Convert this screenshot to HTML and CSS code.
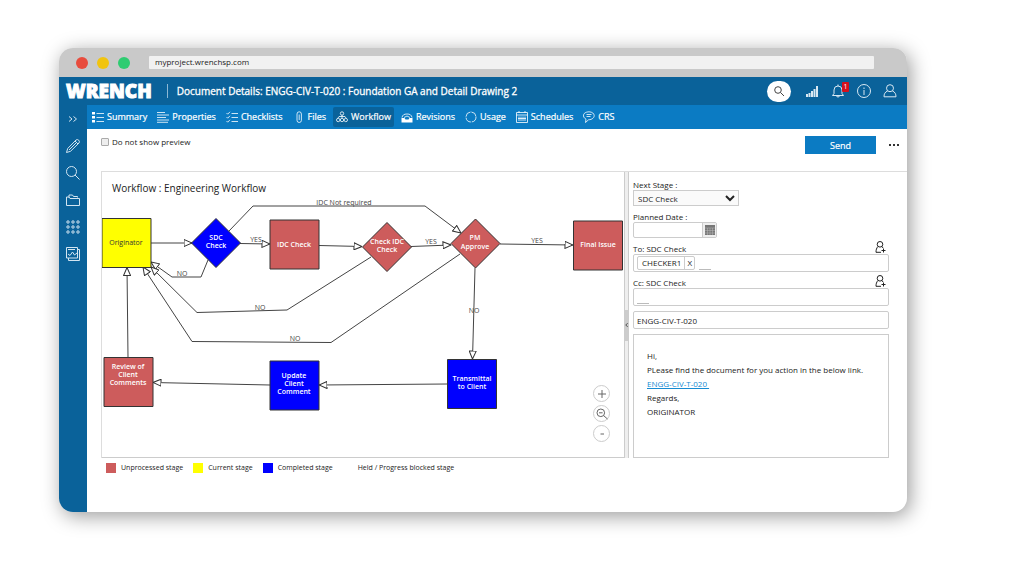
FILE: index.html
```html
<!DOCTYPE html>
<html lang="en">
<head>
<meta charset="utf-8">
<title>Document Details</title>
<link rel="stylesheet" href="styles.css">
</head>
<body>
<div class="window">
  <div class="chrome">
    <span class="dot dot-red"></span><span class="dot dot-yellow"></span><span class="dot dot-green"></span>
    <input class="address" type="text" aria-label="Address" value="myproject.wrenchsp.com">
  </div>

  <header class="topbar">
    <span class="logo">WRENCH</span>
    <span class="divider"></span>
    <h1 class="doc-title">Document Details: ENGG-CIV-T-020 : Foundation GA and Detail Drawing 2</h1>
    <button class="search-btn" aria-label="Search"><svg class="icon" viewBox="0 0 12 12"><circle cx="5" cy="5" r="3.3"/><path d="M7.500 7.500 11 11"/></svg></button>
    <div class="top-icons">
      <button class="icon-btn" aria-label="Signal"><svg class="icon-l bars" viewBox="0 0 14 14"><path d="M1 13v-3h2v3zM3.500 13V9h2v4zM6 13V7h2v6zM8.500 13V5h2v8zM11 13V2h2v11z"/></svg></button>
      <button class="icon-btn" aria-label="Notifications"><svg class="icon-l" viewBox="0 0 14 14"><path d="M1.500 11.500h11L11 9.500V6a4 4 0 0 0-8 0v3.500zM5.500 11.500a1.500 1.500 0 0 0 3 0M7 2V.5"/></svg><span class="badge">1</span></button>
      <button class="icon-btn" aria-label="Information"><svg class="icon-l" viewBox="0 0 14 14"><circle cx="7" cy="7" r="6.500"/><path d="M7 6v5M7 3.500V5"/></svg></button>
      <button class="icon-btn" aria-label="Account"><svg class="icon-l" viewBox="0 0 14 14"><circle cx="7" cy="4.200" r="3.500"/><path d="M4.500 7C2 8 1 10 1 12.800h12C13 10 12 8 9.500 7"/></svg></button>
    </div>
  </header>

  <div class="body">
    <aside class="sidebar">
      <button class="side-btn" aria-label="Expand"><svg class="icon-l" viewBox="0 0 14 14"><path d="m3 4.500 3 2.500-3 2.500M7.500 4.500l3 2.500-3 2.500"/></svg></button>
      <button class="side-btn" aria-label="Edit"><svg class="icon-l" viewBox="0 0 14 14"><path d="m.5 13.500 1.200-4L10 1q1.500-1 2.700.2T13 4L4.500 12.300zM9 2l3 3M3 11l7-7"/></svg></button>
      <button class="side-btn" aria-label="Search"><svg class="icon-l" viewBox="0 0 14 14"><circle cx="5.500" cy="5.500" r="5"/><path d="m9 9 4.500 4.500"/></svg></button>
      <button class="side-btn" aria-label="Folders"><svg class="icon-l" viewBox="0 0 14 14"><path d="M3 4.500V2h3.500l1 1.500h4v1M.5 12.500V4h2.500l1 1.500h9.500v7z"/></svg></button>
      <button class="side-btn" aria-label="Apps"><svg class="icon-l" viewBox="0 0 14 14"><circle cx="2" cy="2" r="1.200"/><circle cx="7" cy="2" r="1.200"/><circle cx="12" cy="2" r="1.200"/><circle cx="2" cy="7" r="1.200"/><circle cx="7" cy="7" r="1.200"/><circle cx="12" cy="7" r="1.200"/><circle cx="2" cy="12" r="1.200"/><circle cx="7" cy="12" r="1.200"/><circle cx="12" cy="12" r="1.200"/></svg></button>
      <button class="side-btn" aria-label="Reports"><svg class="icon-l" viewBox="0 0 14 14"><path d="M.5.5h11v10.500H.5zM11.500 2.500h2v11H2.500V11M2 7l2 1.500L6.500 5l2 3L11 6M2 2.500h7"/></svg></button>
    </aside>

    <div class="main">
      <nav class="tabs">
        <a class="tab" href="#"><svg class="icon" viewBox="0 0 12 12"><path class="solid" d="M0 1h3v2.500H0zM0 5h3v2.500H0zM0 9h3v2.500H0z"/><path d="M4.500 2.500H12M4.500 6.500H12M4.500 10.500H12"/></svg>Summary</a>
        <a class="tab" href="#"><svg class="icon" viewBox="0 0 12 12"><path d="M0 1.500h8M0 4h12M0 6.500h9M0 9h12M0 11.300h11"/></svg>Properties</a>
        <a class="tab" href="#"><svg class="icon" viewBox="0 0 12 12"><path d="m.5 2 1.200 1.200L4 .8M.5 6l1.200 1.200L4 4.800M.5 10l1.200 1.200L4 8.800M5.500 2.500H12M5.500 6.500H12M5.500 10.500H12"/></svg>Checklists</a>
        <a class="tab" href="#"><svg class="icon" viewBox="0 0 12 12"><path d="M4 8V3a2.200 2.200 0 0 1 4.400 0v6.300a2.200 2.200 0 0 1-4.400 0V8M6.200 3.500V9"/></svg>Files</a>
        <a class="tab tab-active" href="#" aria-current="page"><svg class="icon" viewBox="0 0 12 12"><circle cx="6" cy="2.500" r="1.700"/><circle cx="2.200" cy="9" r="1.700"/><circle cx="6" cy="9" r="1.700"/><circle cx="9.800" cy="9" r="1.700"/><path d="M6 4v3M2 7l1-1.500h6L10 7"/></svg>Workflow</a>
        <a class="tab" href="#"><svg class="icon" viewBox="0 0 12 12"><path class="solid" d="M.5 7h3l1 1.500h3l1-1.500h3v4.500H.5z"/><path d="M1 6.500C1.500 4 3 3 6 3s4.500 1 5 3.500M3 6.500q3-3 6 0"/></svg>Revisions</a>
        <a class="tab" href="#"><svg class="icon" viewBox="0 0 12 12"><circle cx="6" cy="6" r="5" stroke-dasharray="6.800 1"/></svg>Usage</a>
        <a class="tab" href="#"><svg class="icon" viewBox="0 0 12 12"><path d="M.5 1.500h11v10H.5zM.5 4h11M3 0v2M9 0v2M3 5.500V10M5 5.500V10M7 5.500V10M9 5.500V10M2 7.500h8"/></svg>Schedules</a>
        <a class="tab" href="#"><svg class="icon" viewBox="0 0 12 12"><path d="M3 8.200C-1 6-.5 1 6 .8 13 1 13 8.500 5.500 8.800L2.500 11.500zM3.500 3.500h5M3.500 5.500h4"/></svg>CRS</a>
      </nav>

      <div class="actions">
        <label class="preview"><input class="check" type="checkbox">Do not show preview</label>
        <button class="send">Send</button>
        <button class="more" aria-label="More"><span class="pt"></span><span class="pt"></span><span class="pt"></span></button>
      </div>

      <div class="panels">
        <section class="flow">
          <h2 class="flow-title">Workflow : Engineering Workflow</h2>
          <svg class="diagram" viewBox="102 195 522 262" role="img" aria-label="Engineering Workflow">
            <defs><marker id="arrow" viewBox="0 0 9 8" refX="8.500" refY="4" markerWidth="9" markerHeight="8" markerUnits="userSpaceOnUse" orient="auto"><path class="head" d="M.5.5 8.500 4 .5 7.500z"/></marker></defs>
            <g class="edge">
              <path d="M151 243h41"/>
              <path d="M229 231 253 206H425L461 233"/>
              <path d="M240 243.500 270 244"/>
              <path d="M319 245.500 362 246.500"/>
              <path d="M411 246.500 451 245"/>
              <path d="M500 244 573 245"/>
              <path d="M208 260 201 277H172L151 262"/>
              <path d="M371 257 287 310 197 312.500 151 267"/>
              <path d="M460 254 331 342.500 192 341.500 143 267"/>
              <path d="M475 268 472.500 359"/>
              <path d="M447 384 319 385"/>
              <path d="M270 385 153 382.500"/>
              <path d="M128 357.500 127 267.500"/>
            </g>
            <g class="node">
              <path class="current" d="M102 218.500h49v49h-49z"/>
              <path class="done" d="M216 218.500 240.500 243 216 267.500 191.500 243z"/>
              <path class="todo" d="M270 220h49v49h-49z"/>
              <path class="todo" d="M387 222.500 411.500 247 387 271.500 362.500 247z"/>
              <path class="todo" d="M475.500 219 500 243.500 475.500 268 451 243.500z"/>
              <path class="todo" d="M573.500 221h49v49h-49z"/>
              <path class="todo" d="M104 357.500h49v49h-49z"/>
              <path class="done" d="M270 361h49v49h-49z"/>
              <path class="done" d="M447.500 359.500h49v49h-49z"/>
            </g>
            <g class="name">
              <text class="dark" x="126" y="245">Originator</text>
              <text x="216" y="240">SDC</text><text x="216" y="248">Check</text>
              <text x="294" y="247">IDC Check</text>
              <text x="387" y="244">Check IDC</text><text x="387" y="252">Check</text>
              <text x="475" y="240">PM</text><text x="475" y="249">Approve</text>
              <text x="598" y="247">Final Issue</text>
              <text x="128" y="369">Review of</text><text x="128" y="377">Client</text><text x="128" y="385">Comments</text>
              <text x="294" y="378">Update</text><text x="294" y="386">Client</text><text x="294" y="394">Comment</text>
              <text x="472" y="381">Transmittal</text><text x="472" y="389">to Client</text>
            </g>
            <g class="edge-name">
              <text x="344" y="205">IDC Not required</text>
              <text x="256" y="242">YES</text><text x="431" y="244">YES</text><text x="537" y="243">YES</text>
              <text x="182" y="276">NO</text><text x="260" y="310">NO</text><text x="295" y="341">NO</text><text x="474" y="313">NO</text>
            </g>
          </svg>
          <div class="zoom">
            <button class="zoom-btn" aria-label="Zoom in"><svg class="icon" viewBox="0 0 12 12"><path d="M2 6h8M6 2v8"/></svg></button>
            <button class="zoom-btn" aria-label="Reset zoom"><svg class="icon" viewBox="0 0 12 12"><circle cx="4.800" cy="4.800" r="3.800"/><path d="M3 4.800h3.600M7.500 7.500l4 3.500"/></svg></button>
            <button class="zoom-btn" aria-label="Zoom out"><svg class="icon" viewBox="0 0 12 12"><path d="M4.500 6h3.500"/></svg></button>
          </div>
        </section>

        <div class="splitter"><button class="grip" aria-label="Collapse"><svg class="grip-icon" viewBox="0 0 4 6"><path d="M3.500.5 1 3l2.500 2.500"/></svg></button></div>

        <form class="form">
          <div class="field">
            <label class="label" for="stage">Next Stage :</label>
            <select class="control select" id="stage"><option>SDC Check</option></select>
          </div>
          <div class="field">
            <label class="label" for="date">Planned Date :</label>
            <div class="control date"><input class="bare" id="date" type="text"><button class="cal" type="button" aria-label="Pick a date"><svg class="cal-icon" viewBox="0 0 10 10"><path class="cal-body" d="M0 0h10v10H0z"/><path class="cal-grid" d="M0 3h10M2.500 3v7M5 3v7M7.500 3v7M0 5.500h10M0 8h10"/></svg></button></div>
          </div>
          <div class="field">
            <div class="label-row"><label class="label" for="to">To: SDC Check</label><button class="add" type="button" aria-label="Add recipient"><svg class="icon" viewBox="0 0 12 12"><circle cx="6" cy="3.300" r="2.800"/><path d="M4 5.500C2.500 7 2 9 2 11.300h5M8 5.500l1 1.500M9.500 7.500v4M7.500 9.500h4"/></svg></button></div>
            <div class="control box"><span class="chip">CHECKER1<button class="chip-x" type="button" aria-label="Remove CHECKER1">X</button></span><input class="blank" id="to" type="text"></div>
          </div>
          <div class="field">
            <div class="label-row"><label class="label" for="cc">Cc: SDC Check</label><button class="add" type="button" aria-label="Add copy recipient"><svg class="icon" viewBox="0 0 12 12"><circle cx="6" cy="3.300" r="2.800"/><path d="M4 5.500C2.500 7 2 9 2 11.300h5M8 5.500l1 1.500M9.500 7.500v4M7.500 9.500h4"/></svg></button></div>
            <div class="control box"><input class="blank" id="cc" type="text"></div>
          </div>
          <input class="control subject" type="text" aria-label="Subject" value="ENGG-CIV-T-020">
          <div class="message">
            <p class="line">Hi,</p>
            <p class="line">PLease find the document for you action in the below link.</p>
            <p class="line"><a class="link" href="#">ENGG-CIV-T-020&nbsp;</a></p>
            <p class="line">Regards,</p>
            <p class="line">ORIGINATOR</p>
          </div>
        </form>
      </div>

      <ul class="legend">
        <li class="key"><span class="swatch swatch-todo"></span>Unprocessed stage</li>
        <li class="key"><span class="swatch swatch-current"></span>Current stage</li>
        <li class="key"><span class="swatch swatch-done"></span>Completed stage</li>
        <li class="key"><span class="swatch"></span>Held / Progress blocked stage</li>
      </ul>
    </div>
  </div>
</div>
</body>
</html>
```
FILE: styles.css
```css
* { box-sizing: border-box; }
body {
  margin: 0;
  padding: 48px 117px 40px 59px;
  background: #fff;
  color: #222;
  font: 8px/11px "Open Sans", "Noto Sans", sans-serif;
}
button, input, select { font: inherit; color: inherit; margin: 0; padding: 0; }
button { border: 0; background: none; display: flex; align-items: center; justify-content: center; }
svg { display: block; fill: none; stroke: currentColor; }
.icon { width: 12px; height: 12px; }
.icon-l { width: 14px; height: 14px; }
.solid { fill: currentColor; stroke: none; }

.window {
  border-radius: 14px;
  overflow: hidden;
  background: #fff;
  box-shadow: 3px 4px 20px rgba(0, 0, 0, .4);
}
.chrome {
  display: flex;
  align-items: center;
  gap: 9px;
  height: 29px;
  padding: 0 33px 0 17px;
  background: #c9c9c9;
}
.dot { width: 12px; height: 12px; border-radius: 50%; }
.dot-red { background: #e84c3d; }
.dot-yellow { background: #f1c40f; }
.dot-green { background: #2ecc71; }
.address {
  flex: 1;
  min-width: 0;
  height: 13px;
  margin-left: 10px;
  padding: 0 6px 2px;
  border: 0;
  border-radius: 1px;
  background: #f1f1f1;
}

.topbar {
  display: flex;
  align-items: center;
  height: 28px;
  padding: 0 10px 0 7px;
  background: #0a629a;
  color: #fff;
}
.logo { font-size: 19px; line-height: 26px; font-weight: 800; -webkit-text-stroke: 1px #fff; }
.divider { width: 1px; height: 14px; margin: 0 9px 0 15px; background: #8db8d4; }
.doc-title { flex: 1; margin: 0; font-size: 10px; line-height: 14px; font-weight: 400; -webkit-text-stroke: .3px #fff; }
.search-btn { width: 24px; height: 21px; margin-right: 14px; border-radius: 11px; background: #fff; color: #444; }
.top-icons { display: flex; gap: 12px; color: #d9e8f2; }
.icon-btn { position: relative; }
.bars { fill: currentColor; stroke: none; }
.badge {
  position: absolute;
  top: -2px;
  right: -4px;
  width: 7px;
  border-radius: 1px;
  background: #d5101c;
  color: #fff;
  font-size: 7px;
  line-height: 10px;
}

.body { display: flex; }
.sidebar {
  width: 28px;
  display: flex;
  flex-direction: column;
  background: #0a629a;
  color: #d3e5f1;
}
.side-btn { height: 27px; }
.main { flex: 1; min-width: 0; }
.tabs {
  display: flex;
  align-items: center;
  gap: 4px;
  height: 24px;
  padding: 0 2px 1px;
  background: #0b7bc3;
}
.tab {
  display: flex;
  align-items: center;
  gap: 3px;
  height: 20px;
  padding: 0 3px;
  border-radius: 2px;
  color: #fff;
  font-size: 9px;
  -webkit-text-stroke: .2px #fff;
  text-decoration: none;
}
.tab .icon { stroke-width: .8; }
.tab-active { background: #0a629a; }

.actions { display: flex; align-items: center; height: 42px; padding: 0 8px 10px 14px; }
.preview { display: flex; align-items: center; gap: 3px; margin-right: auto; padding-bottom: 7px; }
.check { appearance: none; width: 8px; height: 8px; border: 1px solid #aaa; border-radius: 1px; background: #eee; }
.send { width: 71px; height: 18px; background: #0b7bc3; color: #fff; font-size: 9px; -webkit-text-stroke: .2px #fff; }
.more { gap: 2px; margin-left: 13px; }
.pt { width: 2px; height: 2px; background: #333; }

.panels { display: flex; margin-left: 14px; border: solid #ddd; border-width: 1px 0 0 1px; }
.flow { position: relative; flex: 1; min-width: 0; border-bottom: 1px solid #ccc; }
.flow-title { margin: 0; padding: 9px 10px 0; font-size: 10px; line-height: 14px; font-weight: 400; }
.diagram { width: 100%; }
.edge { stroke: #444; }
.edge path { marker-end: url(#arrow); }
.head { fill: #fff; stroke: #333; }
.node { stroke: #333; }
.todo { fill: #cd5c5c; }
.current { fill: #ff0; }
.done { fill: #00f; }
.name, .edge-name { stroke: none; text-anchor: middle; font-size: 7px; }
.name { fill: #fff; font-weight: 600; }
.dark { fill: #333; font-weight: 400; }
.edge-name { fill: #444; }
.zoom { position: absolute; right: 14px; bottom: 15px; display: grid; gap: 3px; }
.zoom-btn { width: 17px; height: 17px; border: 1px solid #ccc; border-radius: 50%; background: #fff; color: #666; }

.splitter { display: flex; align-items: center; width: 5px; border: solid #ccc; border-width: 0 1px; background: #eee; }
.grip { width: 3px; height: 31px; margin-top: 20px; background: #ccc; color: #222; }
.grip-icon { width: 4px; height: 6px; }

.form {
  width: 278px;
  display: flex;
  flex-direction: column;
  gap: 5px;
  padding: 7px 18px 0 4px;
}
.field { display: flex; flex-direction: column; align-items: flex-start; }
.label-row { display: flex; justify-content: space-between; align-items: center; align-self: stretch; height: 11px; padding-right: 3px; }
.add { padding-bottom: 4px; }
.control { border: 1px solid #ccc; border-radius: 2px; background: #fff; }
.select { width: 106px; height: 16px; border-radius: 0; background: #fafafa; }
.date { display: flex; width: 84px; height: 16px; }
.bare { flex: 1; min-width: 0; border: 0; background: none; }
.cal { width: 14px; border-left: 1px solid #ccc; background: #eee; }
.cal-icon { width: 10px; height: 10px; }
.cal-body { fill: #777; stroke: none; }
.cal-grid { stroke: #bbb; stroke-width: .5; }
.box { display: flex; align-items: center; align-self: stretch; gap: 4px; height: 18px; padding: 0 3px; }
.chip { display: flex; height: 14px; padding-left: 4px; border: 1px solid #ccc; border-radius: 2px; line-height: 12px; }
.chip-x { width: 10px; margin-left: 3px; border-left: 1px solid #ccc; }
.blank { width: 12px; height: 14px; border: 0; border-bottom: 1px solid #bbb; background: none; }
.subject { height: 18px; padding: 0 3px; }
.message { flex: 1; padding: 14px 13px 0; border: 1px solid #ccc; }
.line { margin: 0; line-height: 14px; }
.link { color: #168bd2; }

.legend { display: flex; gap: 10px; margin: 0; padding: 4px 19px 39px; list-style: none; font-size: 7px; }
.key { display: flex; align-items: center; gap: 5px; }
.swatch { width: 10px; height: 10px; }
.swatch-todo { background: #cd5c5c; }
.swatch-current { background: #ff0; }
.swatch-done { background: #00f; }
```
